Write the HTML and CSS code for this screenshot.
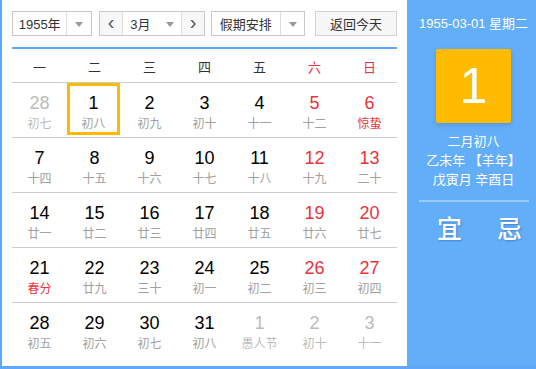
FILE: index.html
```html
<!DOCTYPE html>
<html lang="zh-CN">
<head>
    <meta charset="UTF-8">
    <title>万年历</title>
    <link rel="stylesheet" href="styles.css">
</head>
<body>
    <div class="calendar">
        <div class="main">
            <div class="toolbar">
                <div class="select year-select">
                    <span class="select-text">1955年</span>
                    <span class="select-arrow"></span>
                </div>
                <div class="month-group">
                    <span class="nav-btn">&lsaquo;</span>
                    <div class="select month-select">
                        <span class="select-text">3月</span>
                        <span class="select-arrow"></span>
                    </div>
                    <span class="nav-btn">&rsaquo;</span>
                </div>
                <div class="select holiday-select">
                    <span class="select-text">假期安排</span>
                    <span class="select-arrow"></span>
                </div>
                <span class="today-btn">返回今天</span>
            </div>

            <table class="days">
                <thead>
                    <tr>
                        <th>一</th><th>二</th><th>三</th><th>四</th><th>五</th>
                        <th class="weekend">六</th><th class="weekend">日</th>
                    </tr>
                </thead>
                <tbody id="days-body"></tbody>
            </table>
        </div>

        <div class="side">
            <p class="side-date">1955-03-01 星期二</p>
            <div class="big-day">1</div>
            <p class="lunar">二月初八</p>
            <p class="lunar">乙未年 【羊年】</p>
            <p class="lunar">戊寅月 辛酉日</p>
            <div class="side-line"></div>
            <div class="yiji">
                <span>宜</span>
                <span>忌</span>
            </div>
        </div>
    </div>

    <script>
        // day, lunar text, flags: o = other month, w = weekend, t = solar term, s = selected
        var days = [
            [28, '初七', 'o'], [1, '初八', 's'], [2, '初九', ''], [3, '初十', ''], [4, '十一', ''], [5, '十二', 'w'], [6, '惊蛰', 'wt'],
            [7, '十四', ''], [8, '十五', ''], [9, '十六', ''], [10, '十七', ''], [11, '十八', ''], [12, '十九', 'w'], [13, '二十', 'w'],
            [14, '廿一', ''], [15, '廿二', ''], [16, '廿三', ''], [17, '廿四', ''], [18, '廿五', ''], [19, '廿六', 'w'], [20, '廿七', 'w'],
            [21, '春分', 't'], [22, '廿九', ''], [23, '三十', ''], [24, '初一', ''], [25, '初二', ''], [26, '初三', 'w'], [27, '初四', 'w'],
            [28, '初五', ''], [29, '初六', ''], [30, '初七', ''], [31, '初八', ''], [1, '愚人节', 'o'], [2, '初十', 'o'], [3, '十一', 'o']
        ];

        var body = document.getElementById('days-body');
        var html = '';
        for (var i = 0; i < days.length; i++) {
            if (i % 7 === 0) html += '<tr>';
            var d = days[i];
            var cls = 'cell';
            if (d[2].indexOf('o') > -1) cls += ' other';
            if (d[2].indexOf('w') > -1) cls += ' weekend';
            if (d[2].indexOf('t') > -1) cls += ' term';
            if (d[2].indexOf('s') > -1) cls += ' selected';
            html += '<td><div class="' + cls + '"><span class="num">' + d[0] +
                '</span><span class="lun">' + d[1] + '</span></div></td>';
            if (i % 7 === 6) html += '</tr>';
        }
        body.innerHTML = html;
    </script>
</body>
</html>
```

FILE: styles.css
```css
* {
    margin: 0;
    padding: 0;
    box-sizing: border-box;
}

body {
    font-family: 'Liberation Sans', 'Noto Sans CJK SC', sans-serif;
    background: #fff;
    color: #333;
}

.calendar {
    display: flex;
    width: 536px;
    height: 369px;
    border-left: 2px solid #5ea9f7;
    border-bottom: 3px solid #5ea9f7;
}

/* Left side */
.main {
    width: 405px;
    padding: 11px 10px 0 10px;
    background: #fff;
}

.toolbar {
    display: flex;
    height: 25px;
    padding-bottom: 11px;
    box-sizing: content-box;
    border-bottom: 2px solid #5ea9f7;
}

.select {
    display: flex;
    height: 25px;
    border: 1px solid #c9c9c9;
    background: #fff;
    font-size: 13px;
    color: #333;
}

.select-text {
    display: flex;
    align-items: center;
    justify-content: center;
    border-right: 1px solid #ddd;
}

.select-arrow {
    position: relative;
    width: 24px;
}

.select-arrow::after {
    content: '';
    position: absolute;
    left: 8px;
    top: 10px;
    border-left: 4px solid transparent;
    border-right: 4px solid transparent;
    border-top: 5px solid #999;
}

.year-select {
    width: 80px;
}

.year-select .select-text {
    width: 55px;
}

.month-group {
    display: flex;
    height: 25px;
    margin-left: 7px;
    border: 1px solid #c9c9c9;
}

.nav-btn {
    width: 22px;
    display: flex;
    align-items: center;
    justify-content: center;
    background: #f7f7f7;
    font-size: 20px;
    color: #555;
    line-height: 1;
    padding-bottom: 3px;
}

.month-select {
    height: 23px;
    border-top: none;
    border-bottom: none;
    border-color: #ddd;
    width: 60px;
}

.month-select .select-text {
    width: 36px;
    border-right: none;
}

.holiday-select {
    width: 94px;
    margin-left: 6px;
}

.holiday-select .select-text {
    width: 70px;
}

.today-btn {
    width: 82px;
    height: 25px;
    margin-left: 10px;
    display: flex;
    align-items: center;
    justify-content: center;
    border: 1px solid #d3d3d3;
    background: #f7f7f7;
    font-size: 13px;
    color: #333;
}

/* Days table */
.days {
    width: 385px;
    border-collapse: collapse;
    table-layout: fixed;
}

.days th {
    height: 33px;
    font-size: 13px;
    font-weight: normal;
    color: #333;
    border-bottom: 1px solid #ccc;
    padding-top: 2px;
}

.days th.weekend {
    color: #e8333c;
}

.days td {
    height: 55px;
    padding: 0;
    border-bottom: 1px solid #ccc;
    vertical-align: top;
}

.days tr:last-child td {
    border-bottom: none;
}

.cell {
    display: flex;
    flex-direction: column;
    align-items: center;
    height: 53px;
    padding-top: 10px;
}

.cell .num {
    font-size: 18px;
    line-height: 20px;
    color: #000;
}

.cell .lun {
    font-size: 12px;
    line-height: 16px;
    margin-top: 3px;
    color: #a0a0a0;
}

.cell.weekend .num {
    color: #e8333c;
}

.cell.term .lun {
    color: #e8333c;
}

.cell.other .num {
    color: #bbb;
}

.cell.other .lun {
    color: #bbb;
}

.cell.selected {
    width: 53px;
    height: 52px;
    border: 3px solid #ffb900;
    padding-top: 7px;
}

/* Right side */
.side {
    flex: 1;
    padding-left: 4px;
    background: #63aef9;
    color: #fff;
    display: flex;
    flex-direction: column;
    align-items: center;
}

.side-date {
    margin-top: 15px;
    font-size: 13px;
    line-height: 18px;
}

.big-day {
    width: 75px;
    height: 74px;
    margin-top: 16px;
    background: #ffbb00;
    border-radius: 2px;
    box-shadow: 0 2px 4px rgba(40, 90, 160, 0.3);
    display: flex;
    align-items: center;
    justify-content: center;
    font-size: 50px;
    color: #fff;
}

.lunar {
    font-size: 13px;
    line-height: 19px;
}

.big-day + .lunar {
    margin-top: 9px;
}

.side-line {
    width: 110px;
    height: 2px;
    margin-top: 11px;
    background: #9ccbfb;
}

.yiji {
    display: flex;
    gap: 35px;
    margin-top: 7px;
    padding-left: 12px;
    font-size: 25px;
    font-weight: 500;
    text-shadow: 1px 1px 2px rgba(30, 70, 140, 0.4);
}
```
